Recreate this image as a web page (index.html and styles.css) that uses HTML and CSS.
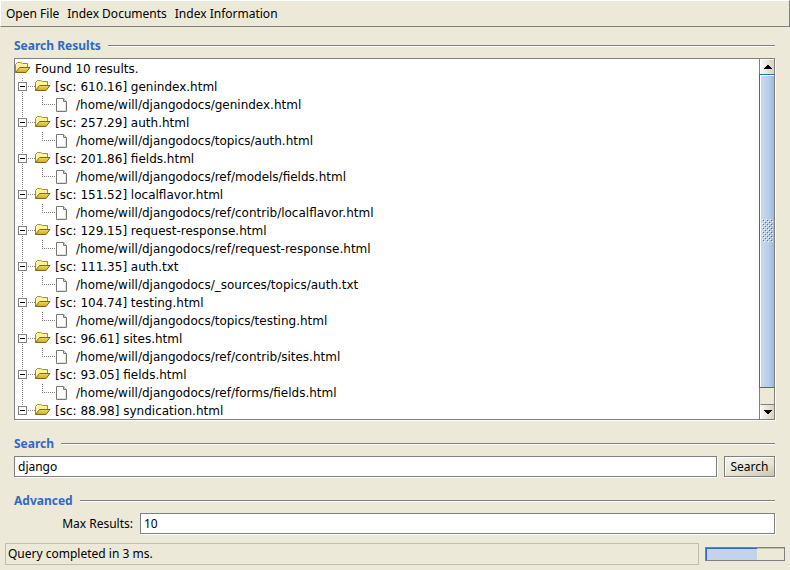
FILE: index.html
```html
<!DOCTYPE html>
<html lang="en">
<head>
<meta charset="utf-8">
<title>Document Search</title>
<link rel="stylesheet" href="styles.css">
</head>
<body>
<svg class="defs" aria-hidden="true">
  <defs>
    <linearGradient id="front" x1="0" y1="0" x2="0" y2="1"><stop offset="0" stop-color="#f4dc68"/><stop offset="1" stop-color="#d0a41c"/></linearGradient>
    <symbol id="folder" viewBox="0 0 16 12">
      <path d="M1 10V3L3 1H6L8 2H12V6H5L2 10Z" fill="#fff3a0"/>
      <path d="M.5 10.500V2.500L2.500 .5H5.500L7.500 1.500H12.500V5" fill="none" stroke="#9c940c"/>
      <path d="M4.500 5.500H15L11 10.500H.5Z" fill="url(#front)" stroke="#7c6a18"/>
    </symbol>
    <symbol id="page" viewBox="0 0 12 14">
      <path d="M.5 .5H7.500L10.500 3.500V13.500H.5Z" fill="#fff" stroke="#777a74"/>
      <path d="M7.500 .5V3.500H10.500" fill="#ddd" stroke="#777a74"/>
      <path d="M9.500 5V12.500H2" fill="none" stroke="#e4e2d8"/>
    </symbol>
  </defs>
</svg>
<nav class="menubar">
  <button>Open File</button>
  <button>Index Documents</button>
  <button>Index Information</button>
</nav>
<main>
  <section class="results">
    <h2>Search Results</h2>
    <div class="pane">
      <ul class="tree">
        <li><div class="row"><svg class="folder"><use href="#folder"/></svg>Found 10 results.</div>
          <ul class="nodes">
            <li><div class="row node"><button class="toggle" aria-label="Collapse"></button><svg class="folder"><use href="#folder"/></svg>[sc: 610.16] genindex.html</div><div class="row leaf"><svg class="page"><use href="#page"/></svg>/home/will/djangodocs/genindex.html</div></li>
            <li><div class="row node"><button class="toggle" aria-label="Collapse"></button><svg class="folder"><use href="#folder"/></svg>[sc: 257.29] auth.html</div><div class="row leaf"><svg class="page"><use href="#page"/></svg>/home/will/djangodocs/topics/auth.html</div></li>
            <li><div class="row node"><button class="toggle" aria-label="Collapse"></button><svg class="folder"><use href="#folder"/></svg>[sc: 201.86] fields.html</div><div class="row leaf"><svg class="page"><use href="#page"/></svg>/home/will/djangodocs/ref/models/fields.html</div></li>
            <li><div class="row node"><button class="toggle" aria-label="Collapse"></button><svg class="folder"><use href="#folder"/></svg>[sc: 151.52] localflavor.html</div><div class="row leaf"><svg class="page"><use href="#page"/></svg>/home/will/djangodocs/ref/contrib/localflavor.html</div></li>
            <li><div class="row node"><button class="toggle" aria-label="Collapse"></button><svg class="folder"><use href="#folder"/></svg>[sc: 129.15] request-response.html</div><div class="row leaf"><svg class="page"><use href="#page"/></svg>/home/will/djangodocs/ref/request-response.html</div></li>
            <li><div class="row node"><button class="toggle" aria-label="Collapse"></button><svg class="folder"><use href="#folder"/></svg>[sc: 111.35] auth.txt</div><div class="row leaf"><svg class="page"><use href="#page"/></svg>/home/will/djangodocs/_sources/topics/auth.txt</div></li>
            <li><div class="row node"><button class="toggle" aria-label="Collapse"></button><svg class="folder"><use href="#folder"/></svg>[sc: 104.74] testing.html</div><div class="row leaf"><svg class="page"><use href="#page"/></svg>/home/will/djangodocs/topics/testing.html</div></li>
            <li><div class="row node"><button class="toggle" aria-label="Collapse"></button><svg class="folder"><use href="#folder"/></svg>[sc: 96.61] sites.html</div><div class="row leaf"><svg class="page"><use href="#page"/></svg>/home/will/djangodocs/ref/contrib/sites.html</div></li>
            <li><div class="row node"><button class="toggle" aria-label="Collapse"></button><svg class="folder"><use href="#folder"/></svg>[sc: 93.05] fields.html</div><div class="row leaf"><svg class="page"><use href="#page"/></svg>/home/will/djangodocs/ref/forms/fields.html</div></li>
            <li><div class="row node"><button class="toggle" aria-label="Collapse"></button><svg class="folder"><use href="#folder"/></svg>[sc: 88.98] syndication.html</div></li>
          </ul>
        </li>
      </ul>
      <div class="scrollbar">
        <button class="arrow up" aria-label="Scroll up"><svg viewBox="0 0 8 4"><path d="M3 0H5V1H6V2H7V3H8V4H0V3H1V2H2V1H3Z"/></svg></button>
        <div class="track"><div class="thumb"><svg class="grip" viewBox="0 0 11 23">
          <defs><pattern id="dots" width="4" height="4" patternUnits="userSpaceOnUse"><path d="M0 0H1V1H0ZM2 2H3V3H2Z" fill="#fff"/><path d="M1 1H2V2H1ZM3 3H4V4H3Z" fill="#4a72b8"/></pattern></defs>
          <rect width="11" height="23" fill="url(#dots)"/></svg></div></div>
        <button class="arrow down" aria-label="Scroll down"><svg viewBox="0 0 8 4"><path d="M0 0H8V1H7V2H6V3H5V4H3V3H2V2H1V1H0Z"/></svg></button>
      </div>
    </div>
  </section>
  <section>
    <h2><label for="query">Search</label></h2>
    <form class="line search">
      <input id="query" type="text" value="django">
      <button class="push" type="button">Search</button>
    </form>
  </section>
  <section>
    <h2>Advanced</h2>
    <div class="line advanced">
      <label for="max">Max Results:</label>
      <input id="max" type="text" value="10">
    </div>
  </section>
</main>
<footer>
  <div class="status" role="status">Query completed in 3 ms.</div>
  <div class="progress" role="progressbar" aria-label="Progress"><div class="bar"></div></div>
</footer>
</body>
</html>
```
FILE: styles.css
```css
* { box-sizing: border-box; }
body {
  margin: 0;
  height: 100vh;
  display: flex;
  flex-direction: column;
  background: #ece9d8;
  color: #000;
  font: 12px/18px "Noto Sans", sans-serif;
}
button, input { font: inherit; color: inherit; margin: 0; }
.defs { position: absolute; width: 0; height: 0; }
.menubar {
  display: flex;
  gap: 8px;
  height: 27px;
  flex: none;
  padding: 0 5px;
  border: 1px solid #808080;
  border-top-color: #fff;
  border-left-color: #fff;
}
.menubar button { border: 0; padding: 0; background: none; }
main {
  flex: 1;
  min-height: 0;
  display: flex;
  flex-direction: column;
  gap: 14px;
  padding: 9px 15px 9px 14px;
}
h2 {
  display: flex;
  align-items: center;
  gap: 7px;
  height: 19px;
  margin: 0 0 3px;
  font-size: 12px;
  color: #316ac5;
}
h2::after {
  content: "";
  flex: 1;
  height: 1px;
  background: #808080;
  box-shadow: 0 1px #fff;
}
.results { flex: 1; min-height: 0; display: flex; flex-direction: column; }
.pane {
  flex: 1;
  min-height: 0;
  display: flex;
  background: #fff;
  border: 1px solid #808080;
  box-shadow: 1px 1px #fff;
}
ul { list-style: none; margin: 0; padding: 0; }
.tree { flex: 1; overflow: hidden; padding-top: 1px; font-family: "DejaVu Sans", sans-serif; }
.row { display: flex; align-items: center; height: 18px; white-space: pre; }
.folder { width: 16px; height: 12px; margin: 0 4px 2px 0; flex: none; }
.page { width: 12px; height: 14px; margin: 0 8px 1px 0; flex: none; }
.nodes {
  background: repeating-linear-gradient(#808080 0 1px, transparent 1px 2px) 7px 0 / 1px calc(100% - 9px) no-repeat;
}
.node {
  padding-left: 3px;
  background: repeating-linear-gradient(90deg, #808080 0 1px, transparent 1px 2px) 13px 8px / 7px 1px no-repeat;
}
.toggle {
  width: 9px;
  height: 9px;
  margin: 0 8px 1px 0;
  padding: 0;
  border: 1px solid #808080;
  background: linear-gradient(#000, #000) center / 5px 1px no-repeat #fff;
}
.leaf {
  padding-left: 41px;
  background:
    repeating-linear-gradient(#808080 0 1px, transparent 1px 2px) 27px 0 / 1px 9px no-repeat,
    repeating-linear-gradient(90deg, #808080 0 1px, transparent 1px 2px) 27px 8px / 13px 1px no-repeat;
}
.scrollbar {
  width: 15px;
  display: flex;
  flex-direction: column;
  border-left: 1px solid #808080;
}
.arrow {
  display: flex;
  align-items: center;
  justify-content: center;
  height: 15px;
  padding: 0;
  border: 1px solid #fff;
  border-width: 1px 0 0 1px;
  background: linear-gradient(90deg, #f7f6ee, #d8d4c0);
}
.arrow svg { width: 8px; height: 4px; }
.down { border-top-color: #808080; }
.track { flex: 1; background: #ece9d8; }
.thumb {
  display: flex;
  align-items: center;
  justify-content: center;
  height: 95%;
  margin-left: -1px;
  border: 1px solid #316ac5;
  border-right: 0;
  box-shadow: inset 1px 1px #fff;
  background: linear-gradient(90deg, #c9daee, #b9cee8 60%, #a0b8d8);
}
.grip { width: 11px; height: 23px; }
.line { display: flex; align-items: center; gap: 7px; height: 21px; }
.line input {
  flex: 1;
  min-width: 0;
  height: 21px;
  padding: 0 3px;
  border: 1px solid #808080;
  box-shadow: 1px 1px #fff;
  background: #fff;
  outline: 0;
}
.push {
  width: 51px;
  height: 21px;
  padding: 0;
  border: 1px solid #808080;
  box-shadow: 1px 1px #fff, inset 1px 1px #fff;
  background: linear-gradient(165deg, #f8f7f0, #e6e3d2 60%, #c8c4b0);
}
.advanced label { width: 119px; text-align: right; }
footer { display: flex; align-items: center; gap: 6px; padding: 0 5px 5px; }
.status { flex: 1; height: 22px; line-height: 20px; padding: 0 2px; border: 1px solid #bfbfae; }
.progress { width: 80px; height: 14px; border: 1px solid #808080; box-shadow: inset 0 1px #bfbcb0; }
.bar { width: 66%; height: 100%; background: #c3d3e9; border: 1px solid #316ac5; border-width: 1px 0 0 1px; }
```
